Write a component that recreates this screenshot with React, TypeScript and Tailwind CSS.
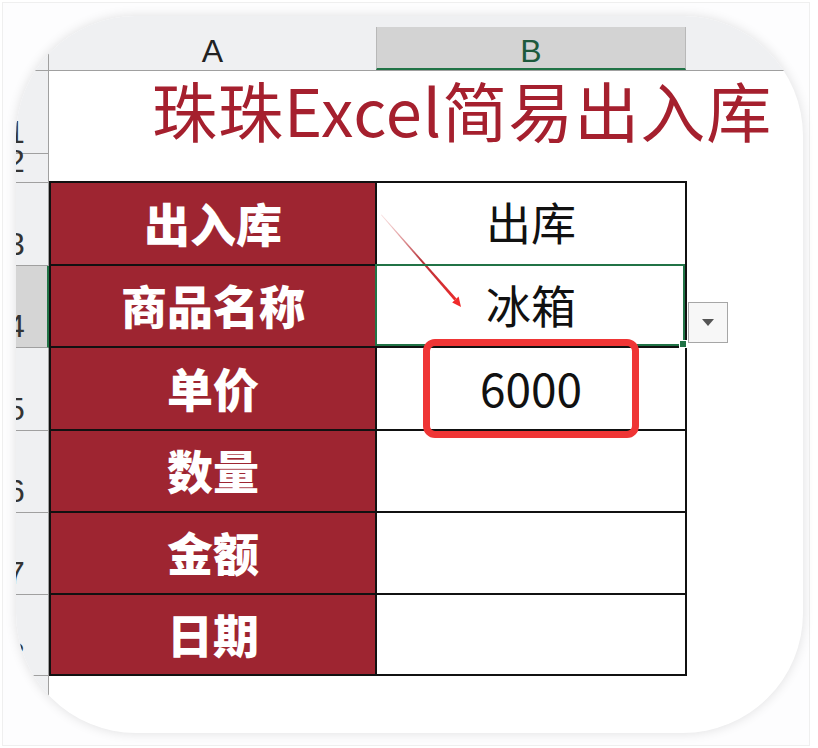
const cjk = "font-['Noto_Sans_CJK_SC','Noto_Sans',sans-serif]";

type Row = {
  num: string;
  h: string;
  label?: string;
  value?: string;
};

const rows: Row[] = [
  { num: "3", h: "h-[83px]", label: "出入库", value: "出库" },
  { num: "4", h: "h-[82px]", label: "商品名称", value: "冰箱" },
  { num: "5", h: "h-[83px]", label: "单价", value: "6000" },
  { num: "6", h: "h-[82px]", label: "数量" },
  { num: "7", h: "h-[82px]", label: "金额" },
  { num: "8", h: "h-[81px]", label: "日期" },
];

function RowHead({ num, selected }: { num: string; selected?: boolean }) {
  return (
    <div
      className={
        selected
          ? "w-[33px] shrink-0 h-full flex items-end pb-[5px] bg-[#d5d5d5] border-b border-b-[#a0a0a0] border-r-2 border-r-[#217346]"
          : "w-[33px] shrink-0 h-full flex items-end pb-[5px] bg-[#eff0f2] border-b border-r border-[#a0a0a0]"
      }
    >
      <span className="-ml-[9px] text-[32px] leading-none text-[#333] font-['Liberation_Sans',sans-serif]">
        {num}
      </span>
    </div>
  );
}

function Arrow() {
  return (
    <svg className="absolute left-0 top-0 w-[100px] h-[130px] overflow-visible z-10" viewBox="0 0 100 130">
      <defs>
        <linearGradient id="arw" x1="4" y1="32" x2="84" y2="124" gradientUnits="userSpaceOnUse">
          <stop offset="0" stopColor="#e89a9a" stopOpacity="0.3" />
          <stop offset="0.5" stopColor="#b8333a" />
          <stop offset="1" stopColor="#f02a2a" />
        </linearGradient>
      </defs>
      <polygon points="4,32 4.6,31.6 79.5,115.5 77.3,117.5" fill="url(#arw)" />
      <polygon points="75.2,119.4 81.6,113.6 84,124" fill="#f02a2a" />
    </svg>
  );
}

export default function App() {
  return (
    <div className="w-[818px] h-[748px] bg-white p-[2px]">
      <div className="w-[808px] h-[744px] border border-[#efefef] bg-[#fdfdfe]">
        <div className="ml-[13px] mt-[13px] w-[787px] h-[717px] rounded-[120px] overflow-hidden bg-white shadow-[0_0_12px_rgba(0,0,0,0.12)] flex flex-col">
          {/* column headers */}
          <div className="h-[55px] shrink-0 flex bg-[#eff0f2] border-b border-[#a0a0a0]">
            <div className="w-[33px] shrink-0 h-full border-r border-[#a0a0a0]" />
            <div className="w-[327px] shrink-0 flex justify-center pt-[19px] text-[32px] leading-none text-[#222] font-['Liberation_Sans',sans-serif]">
              A
            </div>
            <div className="w-[310px] shrink-0 mt-[11px] h-[43px] flex justify-center pt-[8px] bg-[#d3d3d3] border-x border-x-[#b8b8b8] border-b-2 border-b-[#217346] text-[32px] leading-none text-[#1d5a3c] font-['Liberation_Sans',sans-serif]">
              B
            </div>
          </div>

          {/* row 1: title */}
          <div className="h-[83px] shrink-0 flex">
            <RowHead num="1" />
            <div className="w-[328px] shrink-0 flex items-center pl-[103px] pb-[6px] whitespace-nowrap">
              <span className={`${cjk} text-[65px] tracking-[1px] leading-none text-[#a5202e]`}>珠珠Excel简易出入库</span>
            </div>
          </div>

          {/* row 2 */}
          <div className="h-[29px] shrink-0 flex">
            <RowHead num="2" />
            <div className="w-[328px] shrink-0 h-full border-b-2 border-[#111]" />
            <div className="w-[310px] shrink-0 h-full border-b-2 border-[#111]" />
          </div>

          {rows.map((r) => (
            <div key={r.num} className={`${r.h} shrink-0 flex`}>
              <RowHead num={r.num} selected={r.num === "4"} />
              <div className="w-[328px] shrink-0 h-full flex items-center justify-center pb-[4px] bg-[#9e2531] border-l-2 border-r-2 border-b-2 border-[#111]">
                <span className={`${cjk} text-[46px] font-black leading-none text-white`}>{r.label}</span>
              </div>
              <div className="relative w-[310px] shrink-0 h-full flex items-center justify-center pb-[4px] border-r-2 border-b-2 border-[#111]">
                {r.value && (
                  <span className={`${cjk} ${r.num === "5" ? "text-[46px]" : "text-[45px]"} leading-none text-[#111]`}>
                    {r.value}
                  </span>
                )}
                {r.num === "3" && <Arrow />}
                {r.num === "4" && (
                  <>
                    <div className="absolute -left-[2px] -top-[2px] right-0 bottom-0 border-2 border-[#217346] z-10">
                      <div className="absolute -right-[4px] -bottom-[4px] w-[8px] h-[8px] bg-[#217346] border border-white" />
                    </div>
                    <div className="absolute left-[311px] top-[36px] w-[40px] h-[41px] bg-[#f7f7f7] border border-[#a6a6a6] flex items-center justify-center">
                      <div className="w-0 h-0 border-l-[6px] border-r-[6px] border-t-[7px] border-l-transparent border-r-transparent border-t-[#555]" />
                    </div>
                  </>
                )}
                {r.num === "5" && (
                  <div className="absolute left-[46px] -top-[9px] w-[216px] h-[99px] border-[7px] border-[#ef3535] rounded-[12px] z-20" />
                )}
              </div>
            </div>
          ))}

          {/* row 9 */}
          <div className="flex-1 flex">
            <RowHead num="9" />
          </div>
        </div>
      </div>
    </div>
  );
}
